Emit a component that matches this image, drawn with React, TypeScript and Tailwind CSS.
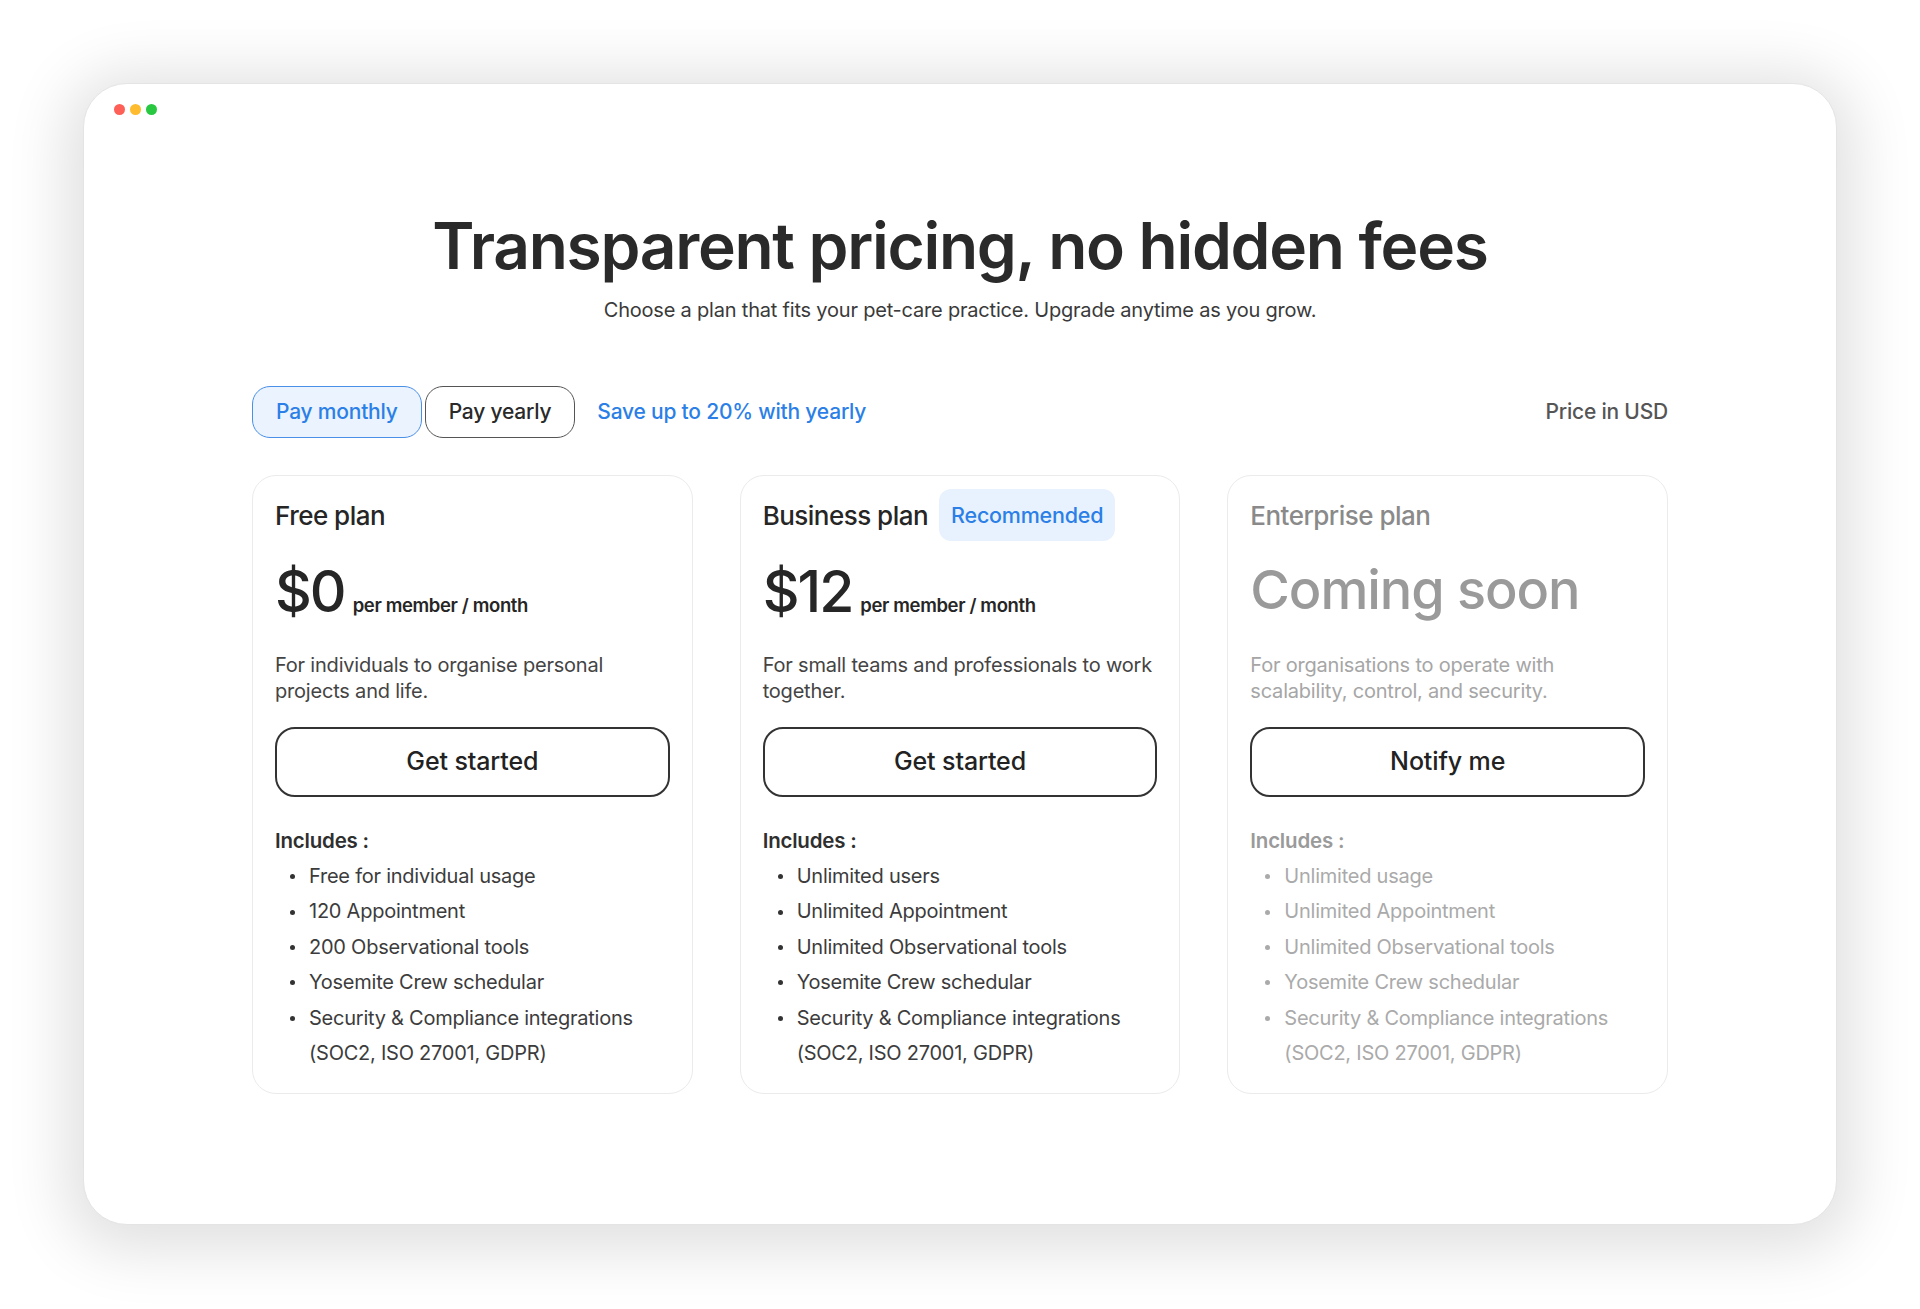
// Pricing section shown inside a mac-style browser window.

type Plan = {
  name: string;
  badge?: string;
  price?: string;
  soon?: boolean;
  blurb: string;
  cta: string;
  features: string[];
};

const plans: Plan[] = [
  {
    name: "Free plan",
    price: "$0",
    blurb: "For individuals to organise personal projects and life.",
    cta: "Get started",
    features: [
      "Free for individual usage",
      "120 Appointment",
      "200 Observational tools",
      "Yosemite Crew schedular",
      "Security & Compliance integrations (SOC2, ISO 27001, GDPR)",
    ],
  },
  {
    name: "Business plan",
    badge: "Recommended",
    price: "$12",
    blurb: "For small teams and professionals to work together.",
    cta: "Get started",
    features: [
      "Unlimited users",
      "Unlimited Appointment",
      "Unlimited Observational tools",
      "Yosemite Crew schedular",
      "Security & Compliance integrations (SOC2, ISO 27001, GDPR)",
    ],
  },
  {
    name: "Enterprise plan",
    soon: true,
    blurb: "For organisations to operate with scalability, control, and security.",
    cta: "Notify me",
    features: [
      "Unlimited usage",
      "Unlimited Appointment",
      "Unlimited Observational tools",
      "Yosemite Crew schedular",
      "Security & Compliance integrations (SOC2, ISO 27001, GDPR)",
    ],
  },
];

function PlanCard({ plan }: { plan: Plan }) {
  const muted = !!plan.soon;
  return (
    <div className="flex flex-col rounded-[24px] border border-[#ebebeb] bg-white px-[22px] pt-[13px] pb-[22px]">
      <div className="flex h-[52px] items-center gap-[11px]">
        <h3
          className={`text-[26px] font-medium tracking-[-0.02em] ${
            muted ? "text-[#8a8a8a]" : "text-[#262626]"
          }`}
        >
          {plan.name}
        </h3>
        {plan.badge && (
          <span className="flex h-[52px] items-center rounded-[12px] bg-[#e8f2fe] px-[12px] text-[21.5px] font-medium tracking-[-0.01em] text-[#2b7fe6]">
            {plan.badge}
          </span>
        )}
      </div>

      {plan.soon ? (
        <div className="mt-[22px] h-[55px] text-[54px] leading-none font-medium tracking-[-0.02em] text-[#9a9a9a]">
          Coming soon
        </div>
      ) : (
        <div className="mt-[22px] flex h-[55px] items-baseline gap-[8px] leading-none">
          <span className="text-[57px] font-medium tracking-[-0.035em] text-[#262626]">{plan.price}</span>
          <span className="text-[18.5px] font-semibold tracking-[-0.02em] text-[#262626]">
            per member / month
          </span>
        </div>
      )}

      <p
        className={`mt-[34px] text-[20px] leading-[26px] tracking-[-0.01em] ${
          muted ? "text-[#a6a6a6]" : "text-[#444]"
        }`}
      >
        {plan.blurb}
      </p>

      <button className="mt-[23px] h-[70px] w-full rounded-[20px] border-2 border-[#333] text-[25px] font-medium tracking-[-0.005em] text-[#222]">
        {plan.cta}
      </button>

      <div
        className={`mt-[30px] text-[20.5px] leading-[28px] font-semibold tracking-[-0.01em] ${
          muted ? "text-[#9a9a9a]" : "text-[#2f2f2f]"
        }`}
      >
        Includes :
      </div>
      <ul
        className={`mt-[4px] text-[20px] leading-[35.4px] tracking-[-0.012em] ${
          muted ? "text-[#aaa]" : "text-[#3c3c3c]"
        }`}
      >
        {plan.features.map((f) => (
          <li key={f} className="flex">
            <span className="flex h-[35.4px] w-[34px] shrink-0 items-center pl-[15px]">
              <span className={`h-[5px] w-[5px] rounded-full ${muted ? "bg-[#aaa]" : "bg-[#333]"}`} />
            </span>
            <span className="flex-1 pr-[20px]">{f}</span>
          </li>
        ))}
      </ul>
    </div>
  );
}

export default function App() {
  return (
    <div className="h-[1309px] w-[1920px] bg-white p-[83px] font-[family-name:Inter,sans-serif]">
      <div className="h-[1142px] rounded-[44px] border border-[#e4e4e4] bg-white shadow-[0_8px_60px_18px_rgba(0,0,0,0.12)]">
        <div className="flex gap-[5px] pl-[30px] pt-[20px]">
          <span className="h-[11px] w-[11px] rounded-full bg-[#fe5f57]" />
          <span className="h-[11px] w-[11px] rounded-full bg-[#febc2e]" />
          <span className="h-[11px] w-[11px] rounded-full bg-[#28c840]" />
        </div>

        <header className="mt-[99px] text-center">
          <h1 className="text-[64px] leading-none font-semibold tracking-[-0.02em] text-[#2a2a2a]">
            Transparent pricing, no hidden fees
          </h1>
          <p className="mt-[18px] text-[20px] leading-[28px] tracking-[-0.01em] text-[#3a3a3a]">
            Choose a plan that fits your pet-care practice. Upgrade anytime as you grow.
          </p>
        </header>

        <div className="mx-auto mt-[62px] w-[1416px]">
          <div className="flex h-[52px] items-center">
            <button className="h-[52px] rounded-[18px] border-[1.5px] border-[#4a8fe8] bg-[#eaf3fe] px-[23px] text-[21px] font-medium tracking-[-0.01em] text-[#2b7fe6]">
              Pay monthly
            </button>
            <button className="ml-[3px] h-[52px] rounded-[18px] border-[1.5px] border-[#555] bg-white px-[23px] text-[21px] font-medium tracking-[-0.01em] text-[#2a2a2a]">
              Pay yearly
            </button>
            <span className="ml-[22px] text-[21px] font-medium tracking-[-0.01em] text-[#2b7fe6]">
              Save up to 20% with yearly
            </span>
            <span className="ml-auto text-[21px] font-medium tracking-[-0.01em] text-[#555]">Price in USD</span>
          </div>

          <div className="mt-[37px] grid grid-cols-3 gap-[47px]">
            {plans.map((p) => (
              <PlanCard key={p.name} plan={p} />
            ))}
          </div>
        </div>
      </div>
    </div>
  );
}
